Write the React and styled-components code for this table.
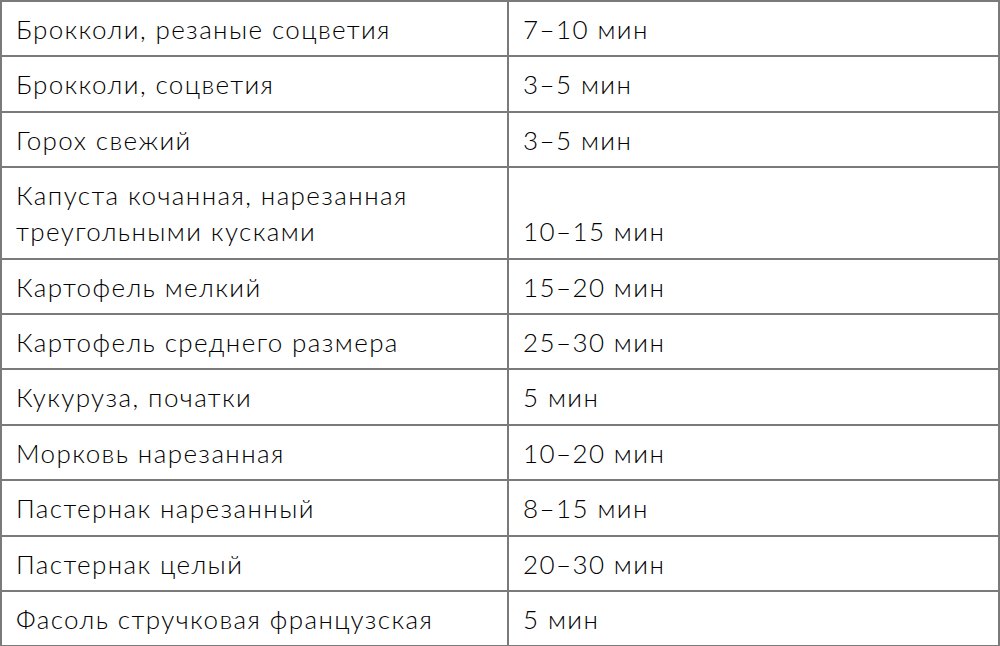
import React from "react";
import styled, { createGlobalStyle } from "styled-components";

const rows = [
  ["Брокколи, резаные соцветия", "7–10 мин"],
  ["Брокколи, соцветия", "3–5 мин"],
  ["Горох свежий", "3–5 мин"],
  ["Капуста кочанная, нарезанная треугольными кусками", "10–15 мин"],
  ["Картофель мелкий", "15–20 мин"],
  ["Картофель среднего размера", "25–30 мин"],
  ["Кукуруза, початки", "5 мин"],
  ["Морковь нарезанная", "10–20 мин"],
  ["Пастернак нарезанный", "8–15 мин"],
  ["Пастернак целый", "20–30 мин"],
  ["Фасоль стручковая французская", "5 мин"],
];

const GlobalStyle = createGlobalStyle`
  html, body {
    margin: 0;
    padding: 0;
    background: #ffffff;
  }
`;

const Table = styled.table`
  width: 1000px;
  border-collapse: collapse;
  font-family: Lato, "Noto Sans", sans-serif;
  font-weight: 300;
  font-size: 26px;
  letter-spacing: 1.4px;
  color: #000000;
`;

const Cell = styled.td`
  border: 2px solid #7a7a7a;
  padding: 9px 14px 8.4px 14px;
  line-height: 36px;
  vertical-align: bottom;
  width: ${(p) => (p.$name ? "477px" : "auto")};
`;

const NameText = styled.div`
  max-width: 430px;
`;

export default function App() {
  return (
    <>
      <GlobalStyle />
      <Table>
        <tbody>
          {rows.map(([name, time]) => (
            <tr key={name}>
              <Cell $name>
                <NameText>{name}</NameText>
              </Cell>
              <Cell>{time}</Cell>
            </tr>
          ))}
        </tbody>
      </Table>
    </>
  );
}
